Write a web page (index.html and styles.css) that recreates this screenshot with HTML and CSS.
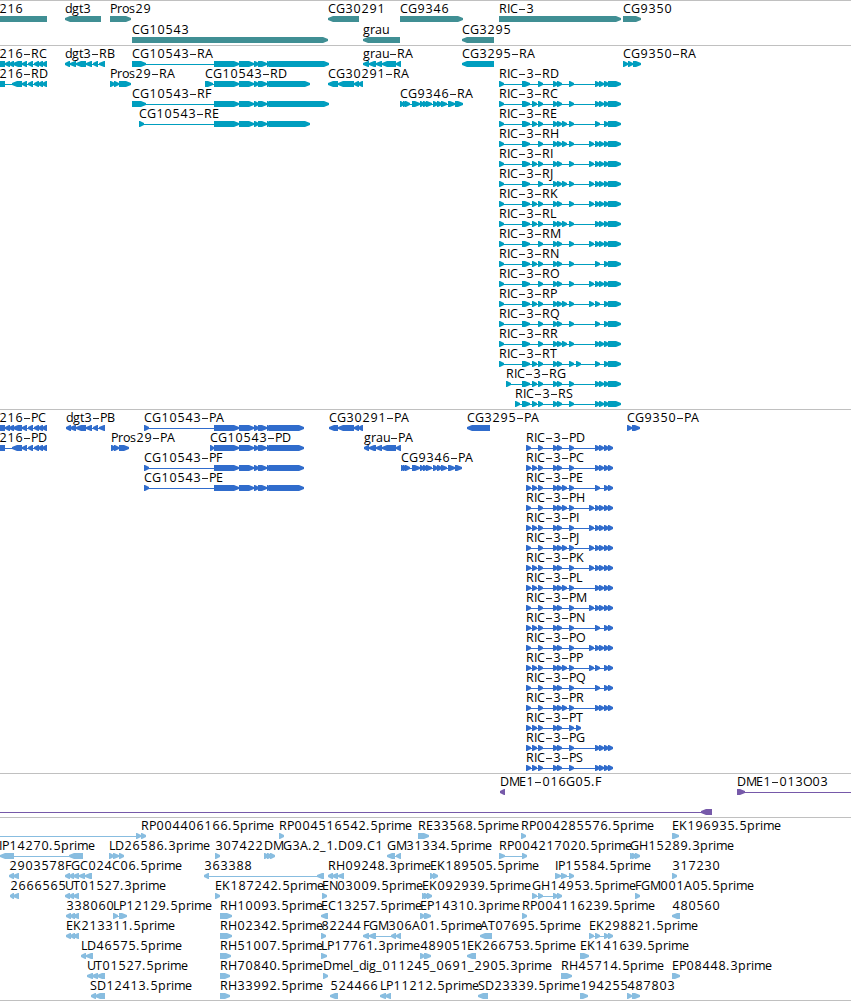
FILE: index.html
```html
<!DOCTYPE html>
<html lang="en">

<head>
    <meta charset="UTF-8">
    <title>Genome tracks</title>
    <link rel="stylesheet" href="styles.css">
</head>

<body>
    <div id="browser">
        <div class="track genes" id="genes"></div>
        <div class="track transcripts" id="transcripts"></div>
        <div class="track proteins" id="proteins"></div>
        <div class="track clones" id="clones"></div>
        <div class="track cdna" id="cdna"></div>
    </div>
    <script src="main.js"></script>
</body>

</html>
```
FILE: styles.css
```css
* {
    margin: 0;
    padding: 0;
}
body {
    background: #fff;
    overflow: hidden;
}
#browser {
    width: 851px;
    border-bottom: 1px solid #c0c0c0;
}
.track {
    border-top: 1px solid #c0c0c0;
    overflow: hidden;
}
.track svg {
    display: block;
}
.track text {
    font-family: "Open Sans", "DejaVu Sans", sans-serif;
    font-size: 12.5px;
    fill: #000;
}
.dash {
    fill: #222;
    shape-rendering: crispEdges;
}
.genes {
    height: 44px;
    color: #408f94;
}
.transcripts {
    height: 363px;
    color: #009ebf;
}
.proteins {
    height: 363px;
    color: #306ccc;
}
.clones {
    height: 43px;
    color: #7659a9;
}
.cdna {
    height: 182px;
    color: #88bde0;
}
.line {
    fill: currentColor;
    shape-rendering: crispEdges;
}
.exon {
    fill: currentColor;
}
```
FILE: main.js
```js
// feature: [row, label, label x, direction, "start-end start-end ..."]
var minusC = "-9-5 5-10 9-14 13-22 22-27 28-33 34-39 38-43 42-47";
var minusD = "-9-5 12-22 22-27 28-33 34-39 38-43 42-47";
var mid = "214-239 239-254 254-259 258-267 267-271 ";

var genes = [
    [0, "216", -1, "-", "-9-47"],
    [0, "dgt3", 65, "-", "65-101"],
    [0, "Pros29", 110, "+", "110-131"],
    [0, "CG30291", 328, "-", "328-359"],
    [0, "CG9346", 400, "+", "400-463"],
    [0, "RIC-3", 499, "+", "499-621"],
    [0, "CG9350", 623, "+", "623-641"],
    [1, "CG10543", 132, "+", "132-328"],
    [1, "grau", 363, "-", "363-400"],
    [1, "CG3295", 462, "-", "462-494"]
];

var transcripts = [
    [0, "216-RC", -1, "-", minusC],
    [1, "216-RD", -1, "-", minusD],
    [0, "dgt3-RB", 65, "-", "65-70 70-76 76-86 86-92 93-98 99-105"],
    [1, "Pros29-RA", 110, "+", "110-115 114-119 119-131"],
    [0, "CG10543-RA", 132, "+", "132-146 " + mid + "269-329"],
    [1, "CG10543-RD", 205, "+", "205-213 " + mid + "269-310"],
    [2, "CG10543-RF", 132, "+", "132-146 " + mid + "269-329"],
    [3, "CG10543-RE", 139, "+", "139-144 " + mid + "269-310"],
    [1, "CG30291-RA", 328, "-", "328-338 338-354 354-359 358-363"],
    [0, "grau-RA", 363, "-", "363-369 369-376 376-382 382-396 396-401"],
    [2, "CG9346-RA", 400, "+", "400-404 403-407 405-410 412-420 420-424 423-428 426-432 433-438 437-442 441-447 448-455 455-463"],
    [0, "CG3295-RA", 462, "-", "462-494"],
    [0, "CG9350-RA", 623, "+", "623-628 628-633 633-641"]
];

var proteins = [
    [0, "216-PC", -1, "-", minusC],
    [1, "216-PD", -1, "-", minusD],
    [0, "dgt3-PB", 66, "-", "66-71 70-76 76-86 86-92 93-98 99-105"],
    [1, "Pros29-PA", 111, "+", "111-116 114-119 119-129"],
    [0, "CG10543-PA", 144, "+", "144-149 " + mid + "269-304"],
    [1, "CG10543-PD", 210, "+", "210-214 " + mid + "269-304"],
    [2, "CG10543-PF", 144, "+", "144-149 " + mid + "269-304"],
    [3, "CG10543-PE", 144, "+", "144-149 " + mid + "269-304"],
    [0, "CG30291-PA", 329, "-", "329-338 338-354 354-359 358-363"],
    [1, "grau-PA", 364, "-", "364-369 369-376 376-382 382-396 396-401"],
    [2, "CG9346-PA", 401, "+", "401-405 403-407 405-410 412-420 420-424 423-428 426-432 433-438 437-442 441-447 448-455 455-462"],
    [0, "CG3295-PA", 467, "-", "467-490"],
    [0, "CG9350-PA", 627, "+", "627-632 632-640"]
];

// RIC-3 isoforms: start of every small exon between the first and the last one
var isoforms = [
    ["D", 499, "538 553 557 569 595 599 604"],
    ["C", 499, "532 538 553 557 569 595 599 604"],
    ["E", 499, "532 538 553 557 562 569 595 604"],
    ["H", 499, "538 553 557 562 569 589 595 599 604"],
    ["I", 499, "532 538 553 557 569 589 595 599 604"],
    ["J", 499, "538 553 557 562 569 589 595 599 604"],
    ["K", 499, "532 538 553 557 569 589 595 599 604"],
    ["L", 499, "532 538 553 557 562 569 595 599 604"],
    ["M", 499, "538 553 557 569 589 595 599 604"],
    ["N", 499, "532 538 553 557 569 595 604"],
    ["O", 499, "538 553 557 569 589 595 599 604"],
    ["P", 499, "532 538 553 557 562 569 589 595 604"],
    ["Q", 499, "538 553 557 569 595 604"],
    ["R", 499, "538 553 557 562 569 595 599 604"],
    ["T", 499, "532 538 553 557 569 576 595 604"],
    ["G", 506, "532 538 553 557 569 595 599 604"],
    ["S", 515, "532 538 553 557 569 595 599 604"]
];
for (var i = 0; i < isoforms.length; i++) {
    var iso = isoforms[i];
    var small = iso[2].split(" ").map(function (s) {
        return s + "-" + (+s + 5);
    });
    transcripts.push([i + 1, "RIC-3-R" + iso[0], iso[1], "+", iso[1] + "-" + (iso[1] + 5) + " 522-530 " + small.join(" ") + " 608-621"]);
    if (iso[0] === "T") {
        small = small.slice(0, 6);
    } else {
        small.push("608-613");
    }
    proteins.push([i + 1, "RIC-3-P" + iso[0], 526, "+", "526-531 " + small.join(" ")]);
}

var clones = [
    [0, "DME1-016G05.F", 500, "-", "500-505"],
    [0, "DME1-013O03", 737, "+", "737-745 860-870"],
    [1, "", 0, "-", "-9--4 701-712"]
];

var cdna = [
    [0, "RP004406166.5prime", 141, "+", "-9--4 136-141 141-146"],
    [0, "RP004516542.5prime", 279, "+", "279-284"],
    [0, "RE33568.5prime", 418, "+", "418-429"],
    [0, "RP004285576.5prime", 521, "+", "521-526"],
    [0, "EK196935.5prime", 672, "+", "672-679"],
    [1, "IP14270.5prime", -1, "-", "0-14 69-83"],
    [1, "LD26586.3prime", 109, "+", "109-114 113-119 119-124"],
    [1, "307422", 215, "+", "215-220"],
    [1, "DMG3A.2_1.D09.C1", 264, "+", "264-269 267-272 270-275"],
    [1, "GM31334.5prime", 387, "-", "387-395 396-401"],
    [1, "RP004217020.5prime", 499, "+", "499-505 522-527"],
    [1, "GH15289.3prime", 630, "+", "630-635 632-637 635-640"],
    [2, "2903578", 9, "-", "9-14 13-19"],
    [2, "FGC024C06.5prime", 65, "-", "65-70 69-74 73-79 79-85 85-92"],
    [2, "363388", 204, "-", "204-209 317-324"],
    [2, "RH09248.3prime", 328, "-", "328-333 332-338 338-344"],
    [2, "EK189505.5prime", 430, "+", "430-434 433-438"],
    [2, "IP15584.5prime", 555, "+", "555-561 561-567 569-574"],
    [2, "317230", 672, "+", "672-677"],
    [3, "2666565", 10, "-", "10-14 13-19"],
    [3, "UT01527.3prime", 65, "-", "65-70 69-74 73-79"],
    [3, "EK187242.5prime", 215, "+", "215-220"],
    [3, "EN03009.5prime", 322, "+", "322-327"],
    [3, "EK092939.5prime", 422, "+", "422-426 424-429 427-432"],
    [3, "GH14953.5prime", 532, "+", "532-537 538-543 553-558 557-562"],
    [3, "FGM001A05.5prime", 635, "+", "635-640"],
    [4, "338060", 66, "-", "66-71 70-75 73-79"],
    [4, "LP12129.5prime", 113, "+", "113-118 119-127"],
    [4, "RH10093.5prime", 220, "+", "220-232"],
    [4, "EC13257.5prime", 321, "-", "321-328"],
    [4, "EP14310.3prime", 420, "+", "420-425 424-431"],
    [4, "RP004116239.5prime", 522, "+", "522-527"],
    [4, "480560", 672, "-", "672-680"],
    [5, "EK213311.5prime", 66, "-", "66-71 70-75 73-79"],
    [5, "RH02342.5prime", 220, "+", "220-232"],
    [5, "82244", 321, "+", "321-326"],
    [5, "FGM306A01.5prime", 363, "-", "363-369 369-376 391-396 396-401"],
    [5, "AT07695.5prime", 480, "-", "480-492"],
    [5, "EK298821.5prime", 589, "+", "589-594 595-600 604-609 608-613"],
    [6, "LD46575.5prime", 81, "-", "81-86 86-93"],
    [6, "RH51007.5prime", 220, "+", "220-231"],
    [6, "LP17761.3prime", 321, "+", "321-327"],
    [6, "489051", 420, "+", "420-425 424-431"],
    [6, "EK266753.5prime", 467, "-", "467-476"],
    [6, "EK141639.5prime", 580, "+", "580-589"],
    [7, "UT01527.5prime", 87, "-", "87-93 92-98 97-105"],
    [7, "RH70840.5prime", 220, "+", "220-230"],
    [7, "Dmel_dig_011245_0691_2905.3prime", 323, "+", "323-328"],
    [7, "RH45714.5prime", 561, "+", "561-572"],
    [7, "EP08448.3prime", 672, "+", "672-680"],
    [8, "SD12413.5prime", 90, "-", "91-96 95-105"],
    [8, "RH33992.5prime", 220, "+", "220-230"],
    [8, "524466", 330, "-", "330-338"],
    [8, "LP11212.5prime", 380, "-", "380-386 385-391"],
    [8, "SD23339.5prime", 478, "-", "478-488"],
    [8, "194255", 580, "+", "580-588"],
    [8, "487803", 627, "+", "627-632 632-640"]
];

// whole pixel advance of each character, digits and the rest are 8
var advance = {
    I: 3, L: 6, F: 6, E: 7, P: 7, T: 7, S: 7, D: 9, G: 9, H: 9, O: 9, M: 10,
    ".": 4, "_": 6, r: 5, i: 3, m: 11, e: 7, l: 3, t: 4, s: 6, o: 7, a: 7, g: 7, d: 7, u: 7
};

function label(text, x, y) {
    var xs = [];
    var dashes = "";
    for (var i = 0; i < text.length; i++) {
        if (text[i] === "-") {
            // the hyphen is short, a thin bar makes it wide
            xs.push(x + 2);
            dashes += '<rect class="dash" x="' + (x + 1) + '" y="' + (y - 4) + '" width="6" height="1"/>';
        } else {
            xs.push(/\d/.test(text[i]) ? x + 0.4 : x);
        }
        x += advance[text[i]] || 8;
    }
    return '<text x="' + xs.join(" ") + '" y="' + y + '">' + text + '</text>' + dashes;
}

function exon(a, b, y, dir) {
    var head = Math.min(5, b - a - 1);
    var d;
    if (dir === "+") {
        d = [a, y, b - head, y, b, y + 2, b, y + 4, b - head, y + 6, a, y + 6];
    } else {
        d = [b, y, a + head, y, a, y + 2, a, y + 4, a + head, y + 6, b, y + 6];
    }
    return '<polygon class="exon" points="' + d.join(" ") + '"/>';
}

function draw(id, features, pitch) {
    var box = document.getElementById(id);
    var html = "";
    features.forEach(function (f) {
        var top = f[0] * pitch;
        var y = top + 15;
        var parts = f[4].split(" ").map(function (s) {
            var m = s.match(/^(-?\d+)-(-?\d+)$/);
            return [+m[1], +m[2]];
        });
        var start = parts[0][0];
        var end = parts[parts.length - 1][1];
        html += '<rect class="line" x="' + start + '" y="' + (y + 3) + '" width="' + (end - start) + '" height="1"/>';
        parts.forEach(function (p) {
            html += exon(p[0], p[1], y, f[3]);
        });
        if (f[1]) {
            html += label(f[1], f[2], top + 12);
        }
    });
    box.innerHTML = '<svg width="851" height="' + box.clientHeight + '">' + html + '</svg>';
}

draw("genes", genes, 21);
draw("transcripts", transcripts, 20);
draw("proteins", proteins, 20);
draw("clones", clones, 20);
draw("cdna", cdna, 20);
```
